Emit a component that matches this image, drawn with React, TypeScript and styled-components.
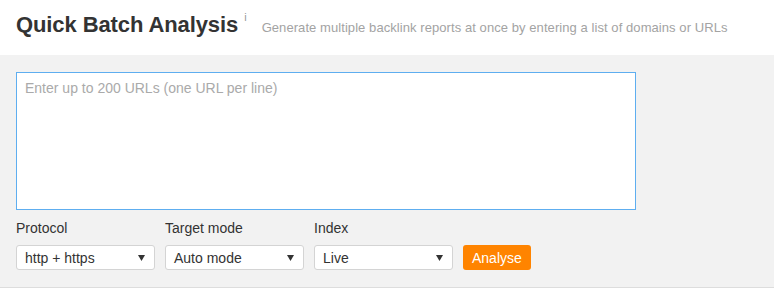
import React from 'react';
import styled, { createGlobalStyle } from 'styled-components';

const GlobalStyle = createGlobalStyle`
  html, body {
    margin: 0;
    padding: 0;
    background: #fff;
    font-family: "Liberation Sans", Arial, sans-serif;
  }
`;

const App = () => {
  return (
    <Page>
      <GlobalStyle />
      <Header>
        <Title>Quick Batch Analysis</Title>
        <InfoMark>i</InfoMark>
        <Subtitle>Generate multiple backlink reports at once by entering a list of domains or URLs</Subtitle>
      </Header>
      <FormPanel>
        <UrlInput autoFocus placeholder="Enter up to 200 URLs (one URL per line)" />
        <Controls>
          <Field>
            <FieldLabel>Protocol</FieldLabel>
            <Select value="http + https" />
          </Field>
          <Field>
            <FieldLabel>Target mode</FieldLabel>
            <Select value="Auto mode" />
          </Field>
          <Field>
            <FieldLabel>Index</FieldLabel>
            <Select value="Live" />
          </Field>
          <AnalyseButton>Analyse</AnalyseButton>
        </Controls>
      </FormPanel>
    </Page>
  );
};

const Select = ({ value }: { value: string }) => (
  <SelectBox>
    <SelectValue>{value}</SelectValue>
    <Caret viewBox="0 0 7 6">
      <path d="M0 0 L7 0 L3.5 6 Z" fill="#333" />
    </Caret>
  </SelectBox>
);

const Page = styled.div`
  width: 774px;
  height: 308px;
  background: #fff;
`;

const Header = styled.div`
  display: flex;
  align-items: baseline;
  height: 55px;
  box-sizing: border-box;
  padding: 12px 16px 0;
  white-space: nowrap;
`;

const Title = styled.h1`
  margin: 0;
  font-size: 22px;
  font-weight: bold;
  color: #333;
  letter-spacing: -0.1px;
`;

const InfoMark = styled.span`
  position: relative;
  top: -11px;
  margin-left: 6px;
  font-size: 11px;
  color: #999;
`;

const Subtitle = styled.span`
  margin-left: 15px;
  font-size: 13px;
  color: #a3a3a3;
  letter-spacing: 0.07px;
`;

const FormPanel = styled.div`
  background: #f2f2f2;
  border-bottom: 1px solid #ddd;
  padding: 17px 16px 17px;
  box-sizing: border-box;
  height: 233px;
`;

const UrlInput = styled.textarea`
  display: block;
  width: 620px;
  height: 138px;
  box-sizing: border-box;
  margin: 0;
  padding: 7px 8px;
  border: 1px solid #5eaef0;
  background: #fff;
  resize: none;
  outline: none;
  font-family: "Liberation Sans", Arial, sans-serif;
  font-size: 14px;
  color: #333;
  caret-color: #333;

  &::placeholder {
    color: #aaa;
  }
`;

const Controls = styled.div`
  display: flex;
  align-items: flex-end;
  gap: 10px;
  margin-top: 10px;
`;

const Field = styled.div`
  display: flex;
  flex-direction: column;
`;

const FieldLabel = styled.label`
  font-size: 14px;
  color: #333;
  line-height: 17px;
  margin-bottom: 8px;
`;

const SelectBox = styled.div`
  display: flex;
  align-items: center;
  justify-content: space-between;
  width: 139px;
  height: 25px;
  box-sizing: border-box;
  padding: 0 9px 0 8px;
  background: #fff;
  border: 1px solid #d4d4d4;
  border-radius: 3px;
`;

const SelectValue = styled.span`
  font-size: 14px;
  color: #333;
`;

const Caret = styled.svg`
  width: 7px;
  height: 6px;
`;

const AnalyseButton = styled.button`
  height: 25px;
  padding: 0 9px;
  border: none;
  border-radius: 3px;
  background: #ff8400;
  color: #fff;
  font-family: "Liberation Sans", Arial, sans-serif;
  font-size: 14px;
  cursor: pointer;
`;

export default App;
